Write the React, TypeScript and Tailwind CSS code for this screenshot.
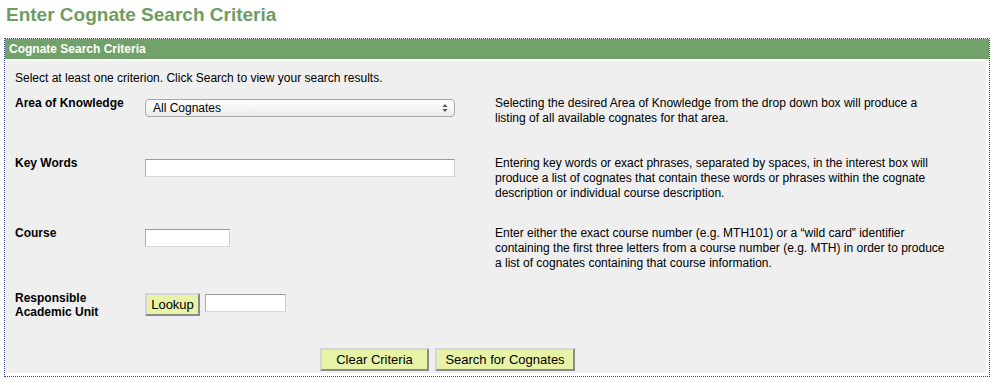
import React from 'react';

const font = { fontFamily: '"Liberation Sans", Arial, sans-serif' };

function Btn({ children, className = '' }: { children: React.ReactNode; className?: string }) {
  return (
    <button
      className={`bg-[#e7f4a8] border-2 border-t-[#d6d6d6] border-l-[#d6d6d6] border-b-[#8a8a8a] border-r-[#8a8a8a] text-black text-[13px] leading-none ${className}`}
    >
      {children}
    </button>
  );
}

function Row({
  label,
  children,
  desc,
  height,
}: {
  label: React.ReactNode;
  children: React.ReactNode;
  desc?: React.ReactNode;
  height: string;
}) {
  return (
    <div className={`flex ${height}`}>
      <div className="w-[130px] font-bold text-[12px] leading-[14px] pt-px">{label}</div>
      <div className="w-[350px]">{children}</div>
      <div className="flex-1 text-[12px] leading-[15px] pt-px">{desc}</div>
    </div>
  );
}

export default function App() {
  return (
    <div className="w-[999px] h-[385px] bg-white text-black" style={font}>
      <h1 className="pl-[6px] pt-[4px] h-[38px] text-[19px] leading-[22px] font-bold text-[#6e9c63]">
        Enter Cognate Search Criteria
      </h1>
      <div className="ml-[4px] w-[986px] h-[339px] border border-dotted border-[#33428a] flex flex-col">
        <div className="h-[20px] bg-[#70a26a] text-white font-bold text-[12px] leading-[20px] pl-[4px]">
          Cognate Search Criteria
        </div>
        <div className="flex-1 mt-[2px] mr-[3px] mb-[3px] bg-[#efefef] pl-[10px] pt-[10px] flex flex-col">
          <p className="text-[12px] leading-[15px] h-[24px]">
            Select at least one criterion. Click Search to view your search results.
          </p>
          <Row
            height="h-[60px]"
            label="Area of Knowledge"
            desc={
              <>
                Selecting the desired Area of Knowledge from the drop down box will produce a
                <br />
                listing of all available cognates for that area.
              </>
            }
          >
            <div className="mt-[4px] w-[310px] h-[18px] rounded-[4px] border border-[#a8a8a8] bg-gradient-to-b from-white to-[#ececec] flex items-center justify-between pl-[7px] pr-[6px] text-[12px]">
              <span>All Cognates</span>
              <svg width="6" height="10" viewBox="0 0 6 10">
                <path d="M3 1 L5.5 4 L0.5 4 Z" fill="#555" />
                <path d="M3 9 L5.5 6 L0.5 6 Z" fill="#555" />
              </svg>
            </div>
          </Row>
          <Row
            height="h-[70px]"
            label="Key Words"
            desc={
              <>
                Entering key words or exact phrases, separated by spaces, in the interest box will
                <br />
                produce a list of cognates that contain these words or phrases within the cognate
                <br />
                description or individual course description.
              </>
            }
          >
            <input className="mt-[4px] w-[310px] h-[18px] bg-white border border-t-[#9a9a9a] border-l-[#b0b0b0] border-r-[#cfcfcf] border-b-[#d8d8d8] outline-none" />
          </Row>
          <Row
            height="h-[65px]"
            label="Course"
            desc={
              <>
                Enter either the exact course number (e.g. MTH101) or a “wild card” identifier
                <br />
                containing the first three letters from a course number (e.g. MTH) in order to produce
                <br />
                a list of cognates containing that course information.
              </>
            }
          >
            <input className="mt-[4px] w-[85px] h-[18px] bg-white border border-t-[#9a9a9a] border-l-[#b0b0b0] border-r-[#cfcfcf] border-b-[#d8d8d8] outline-none" />
          </Row>
          <Row
            height="h-[58px]"
            label={
              <>
                Responsible
                <br />
                Academic Unit
              </>
            }
          >
            <div className="flex items-start gap-[5px] mt-[3px]">
              <Btn className="w-[55px] h-[23px]">Lookup</Btn>
              <input className="mt-px w-[81px] h-[18px] bg-white border border-t-[#9a9a9a] border-l-[#b0b0b0] border-r-[#cfcfcf] border-b-[#d8d8d8] outline-none" />
            </div>
          </Row>
          <div className="flex gap-[6px] pl-[305px]">
            <Btn className="w-[109px] h-[23px]">Clear Criteria</Btn>
            <Btn className="w-[140px] h-[23px]">Search for Cognates</Btn>
          </div>
        </div>
      </div>
    </div>
  );
}
